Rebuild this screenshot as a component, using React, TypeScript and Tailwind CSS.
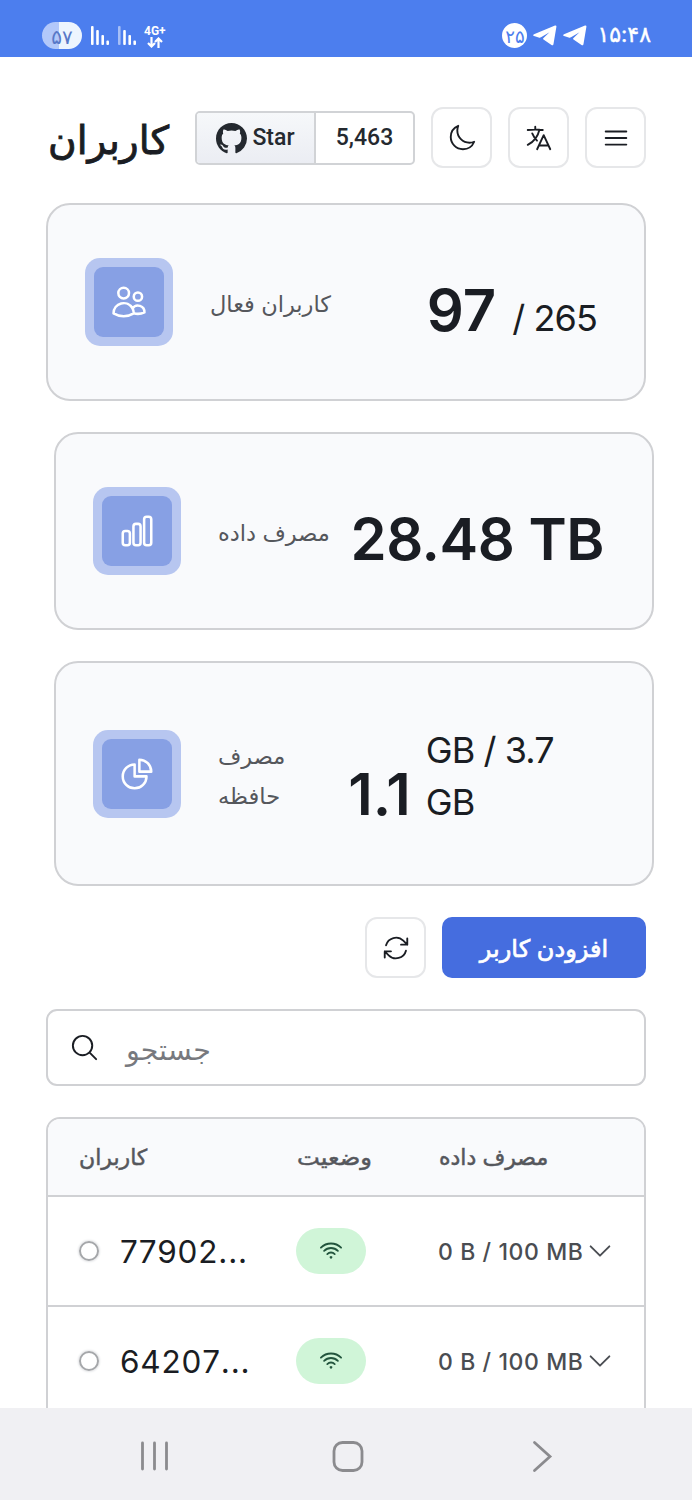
import type { ReactNode } from "react";
import {
  HiOutlineArrowPath,
  HiOutlineBars3,
  HiOutlineChartPie,
  HiOutlineChevronDown,
  HiOutlineLanguage,
  HiOutlineMagnifyingGlass,
  HiOutlineMoon,
  HiOutlineUsers,
  HiOutlineWifi,
} from "react-icons/hi2";

interface User {
  name: string;
  usage: string;
}

const users: User[] = [
  { name: "77902...", usage: "0 B / 100 MB" },
  { name: "64207...", usage: "0 B / 100 MB" },
];

function SignalBars({ dim = false }: { dim?: boolean }) {
  return (
    <svg width="18" height="20" viewBox="0 0 18 20" fill="white">
      <rect x="0" y="0" width="2.6" height="19" rx="1" opacity={dim ? 0.5 : 1} />
      <rect x="5.2" y="4" width="2.6" height="15" rx="1" />
      <rect x="10.4" y="9" width="2.6" height="10" rx="1" />
      <rect x="15.4" y="14.5" width="2.6" height="4.5" rx="1" />
    </svg>
  );
}

function TelegramPlane() {
  return (
    <svg className="mt-[3px] ml-[6px]" width="24" height="21" viewBox="0 0 24 21" fill="white">
      <path d="M1 9.200L22 .600C23 .300 23.600.800 23.400 1.800L20.500 19c-.200 1.300-1 1.600-2 1l-8-5.500c-.700-.500-.600-1 0-1.500L16.500 7.200 8 12.300c-.800.500-1.500.500-2.300.200L1 11c-1.100-.400-1.100-1.300 0-1.800z" />
    </svg>
  );
}

function GithubMark() {
  return (
    <svg width="31" height="31" viewBox="0 0 16 16" fill="currentColor">
      <path d="M8 0C3.58 0 0 3.58 0 8c0 3.54 2.29 6.53 5.47 7.59.4.07.55-.17.55-.38 0-.19-.01-.82-.01-1.49-2.01.37-2.53-.49-2.69-.94-.09-.23-.48-.94-.82-1.13-.28-.15-.68-.52-.01-.53.63-.01 1.08.58 1.23.82.72 1.21 1.87.87 2.33.66.07-.52.28-.87.51-1.07-1.78-.2-3.64-.89-3.64-3.95 0-.87.31-1.59.82-2.15-.08-.2-.36-1.02.08-2.12 0 0 .67-.21 2.2.82.64-.18 1.32-.27 2-.27.68 0 1.36.09 2 .27 1.53-1.04 2.2-.82 2.2-.82.44 1.1.16 1.92.08 2.12.51.56.82 1.27.82 2.15 0 3.07-1.87 3.75-3.65 3.95.29.25.54.73.54 1.48 0 1.07-.01 1.93-.01 2.2 0 .21.15.46.55.38A8.013 8.013 0 0016 8c0-4.42-3.58-8-8-8z" />
    </svg>
  );
}

function ChartBars() {
  return (
    <svg width="38" height="38" viewBox="0 0 24 24" fill="none" stroke="currentColor" strokeWidth="1.6">
      <rect x="3" y="12" width="4.500" height="9" rx="1.600" />
      <rect x="9.750" y="7.500" width="4.500" height="13.500" rx="1.600" />
      <rect x="16.500" y="3" width="4.500" height="18" rx="1.600" />
    </svg>
  );
}

function StatusBar() {
  return (
    <div className="flex h-[57px] shrink-0 items-start justify-between bg-[#4c7eee] pr-[41px] pl-[42px] text-white">
      <div className="flex pt-[22px]">
        <div className="flex h-[27px] w-10 items-center justify-center rounded-full bg-linear-to-r from-[#b2c8fa] from-43% to-[#edf5fe] to-43% pt-[2px] text-[20px] text-[#5878c8]">
          ۵۷
        </div>
        <div className="mt-1 ml-[9px]"><SignalBars /></div>
        <div className="mt-1 ml-[9px]"><SignalBars dim /></div>
        <div className="mt-[3px] ml-2 flex flex-col items-center">
          <span className="font-[Roboto] text-[12px] leading-[12px] font-bold">4G+</span>
          <svg width="16" height="11" viewBox="0 0 16 11" fill="none" stroke="white" strokeWidth="2.2">
            <path d="M4.5 0v9M1 6l3.500 3.500L8 6M11.500 11V2M8 5l3.500-3.500L15 5" />
          </svg>
        </div>
      </div>
      <div className="flex pt-[22px]">
        <div className="mt-px flex size-[25px] items-center justify-center rounded-full bg-white pt-[2px] text-[18px] text-[#4c7eee]">۲۵</div>
        <TelegramPlane />
        <TelegramPlane />
        <span className="ml-[10px] text-[22px] leading-[24px] [-webkit-text-stroke:0.4px]">۱۵:۴۸</span>
      </div>
    </div>
  );
}

function IconButton({ children }: { children: ReactNode }) {
  return (
    <button
      type="button"
      className="flex size-[61px] shrink-0 items-center justify-center rounded-[12px] border-2 border-[#e6e7e9] bg-white text-[#1a1d23]"
    >
      {children}
    </button>
  );
}

function Header() {
  return (
    <header className="flex h-[61px] items-center">
      <h1 className="mt-[3px] w-[149px] pl-[2px] text-[39px] leading-[61px] [-webkit-text-stroke:0.9px]">کاربران</h1>
      <div className="flex h-[54px] w-[220px] overflow-hidden rounded-[5px] border-2 border-[#d1d3d6] font-[Roboto] text-[23px] font-medium text-[#24292f]">
        <div className="flex w-[119px] items-center justify-center gap-[5px] border-r-2 border-[#d1d3d6] bg-linear-to-b from-[#f6f8fa] to-[#ebedf3] pt-px">
          <GithubMark />
          Star
        </div>
        <div className="flex flex-1 items-center justify-center pt-[2px]">5,463</div>
      </div>
      <div className="ml-auto flex gap-4">
        <IconButton><HiOutlineMoon className="size-[30px]" /></IconButton>
        <IconButton><HiOutlineLanguage className="size-[30px]" /></IconButton>
        <IconButton><HiOutlineBars3 className="size-[30px]" /></IconButton>
      </div>
    </header>
  );
}

function StatCard({ icon, label, className, children }: { icon: ReactNode; label: ReactNode; className: string; children: ReactNode }) {
  return (
    <section className={`flex w-[600px] shrink-0 items-center rounded-[24px] border-2 border-[#d0d1d4] bg-[#f9fafc] pl-[37px] ${className}`}>
      <div className="flex size-[88px] shrink-0 items-center justify-center rounded-[15px] bg-[#b7c6f0]">
        <div className="flex size-[70px] items-center justify-center rounded-[9px] bg-[#87a0e4] text-white">{icon}</div>
      </div>
      <p className="mt-[4px] ml-[37px] shrink-0 text-[22.5px] leading-[40px] text-[#55575c]">{label}</p>
      {children}
    </section>
  );
}

function UserRow({ user }: { user: User }) {
  return (
    <div className="flex h-[110px] shrink-0 items-center border-b-2 border-[#d0d1d4]">
      <div className="ml-[31px] size-5 rounded-full border-2 border-[#a5a7aa] shadow-[0_0_2px_1px_#e5e6e8]" />
      <span className="mt-[2px] ml-[21px] w-[176px] text-[31.5px] tracking-[0.8px] [font-kerning:none]">{user.name}</span>
      <span className="flex h-[46px] w-[70px] items-center justify-center rounded-full bg-[#d0f5d8] text-[#22543d]">
        <HiOutlineWifi className="size-6" strokeWidth={1.8} />
      </span>
      <span className="mt-[2px] ml-[72px] text-[23px] font-medium tracking-[0.6px] text-[#4a4d52]">{user.usage}</span>
      <HiOutlineChevronDown className="ml-[1px] size-[30px] text-[#4a4d52]" />
    </div>
  );
}

function NavBar() {
  return (
    <nav className="flex h-[92px] shrink-0 items-center bg-[#f0f0f3] pt-[6px] pl-[138px]">
      <svg width="416" height="36" viewBox="0 0 416 36" fill="none" stroke="#8b8b8e" strokeWidth="2.8" strokeLinecap="round">
        <path d="M4.500 4v26M16.500 4v26M28.500 4v26" />
        <rect x="196" y="3.500" width="28" height="28" rx="8.500" />
        <path d="M396.500 3.500l15.500 14-15.500 14" />
      </svg>
    </nav>
  );
}

export default function App() {
  return (
    <div className="flex h-[1500px] w-[692px] flex-col overflow-hidden bg-white font-[Inter,'DejaVu_Sans',sans-serif] text-[#1a1d23]">
      <StatusBar />
      <main className="flex min-h-0 flex-1 flex-col overflow-hidden px-[46px] pt-[50px]">
        <Header />
        <StatCard className="mt-[35px] h-[198px]" icon={<HiOutlineUsers className="size-[38px]" strokeWidth={1.6} />} label="کاربران فعال">
          <div className="mt-[17px] mr-[47px] ml-auto flex items-baseline">
            <span className="text-[58px] font-semibold">97</span>
            <span className="ml-4 text-[36px] tracking-[-0.9px]">/ 265</span>
          </div>
        </StatCard>
        <StatCard className="mt-[31px] ml-2 h-[198px]" icon={<ChartBars />} label="مصرف داده">
          <div className="mt-[17px] mr-[48px] ml-auto text-[58px] font-semibold tracking-[-0.5px] whitespace-nowrap">28.48 TB</div>
        </StatCard>
        <StatCard
          className="mt-[31px] ml-2 h-[225px]"
          icon={<HiOutlineChartPie className="size-[38px]" strokeWidth={1.6} />}
          label={<>مصرف<br />حافظه</>}
        >
          <div className="mt-[15px] ml-[63px] flex items-baseline-last">
            <span className="text-[58px] font-semibold">1.1</span>
            <span className="ml-[15px] w-[140px] text-[36px] leading-[52px] tracking-[-0.9px]">GB / 3.7 GB</span>
          </div>
        </StatCard>

        <div className="mt-[31px] flex justify-end gap-4">
          <IconButton><HiOutlineArrowPath className="size-[30px]" /></IconButton>
          <button type="button" className="h-[61px] w-[204px] rounded-[10px] bg-[#456ddf] pt-[2px] text-[24px] text-white [-webkit-text-stroke:0.7px]">
            افزودن کاربر
          </button>
        </div>

        <div className="mt-[31px] flex h-[77px] shrink-0 items-center rounded-[11px] border-2 border-[#d0d1d4] pl-[21px]">
          <HiOutlineMagnifyingGlass className="size-[31px]" />
          <span className="mt-[5px] ml-[26px] text-[28.5px] text-[#77797e]">جستجو</span>
        </div>

        <div className="mt-[31px] flex h-[400px] shrink-0 flex-col overflow-hidden rounded-t-[14px] border-2 border-[#d0d1d4]">
          <div className="flex h-[78px] shrink-0 items-center border-b-2 border-[#d0d1d4] bg-[#f9fafc] pt-px pl-[31px] text-[22px] text-[#55575c] [-webkit-text-stroke:0.5px]">
            <span className="w-[218px]">کاربران</span>
            <span className="w-[142px] origin-left scale-x-110">وضعیت</span>
            <span>مصرف داده</span>
          </div>
          {users.map((user) => (
            <UserRow key={user.name} user={user} />
          ))}
        </div>
      </main>
      <NavBar />
    </div>
  );
}
